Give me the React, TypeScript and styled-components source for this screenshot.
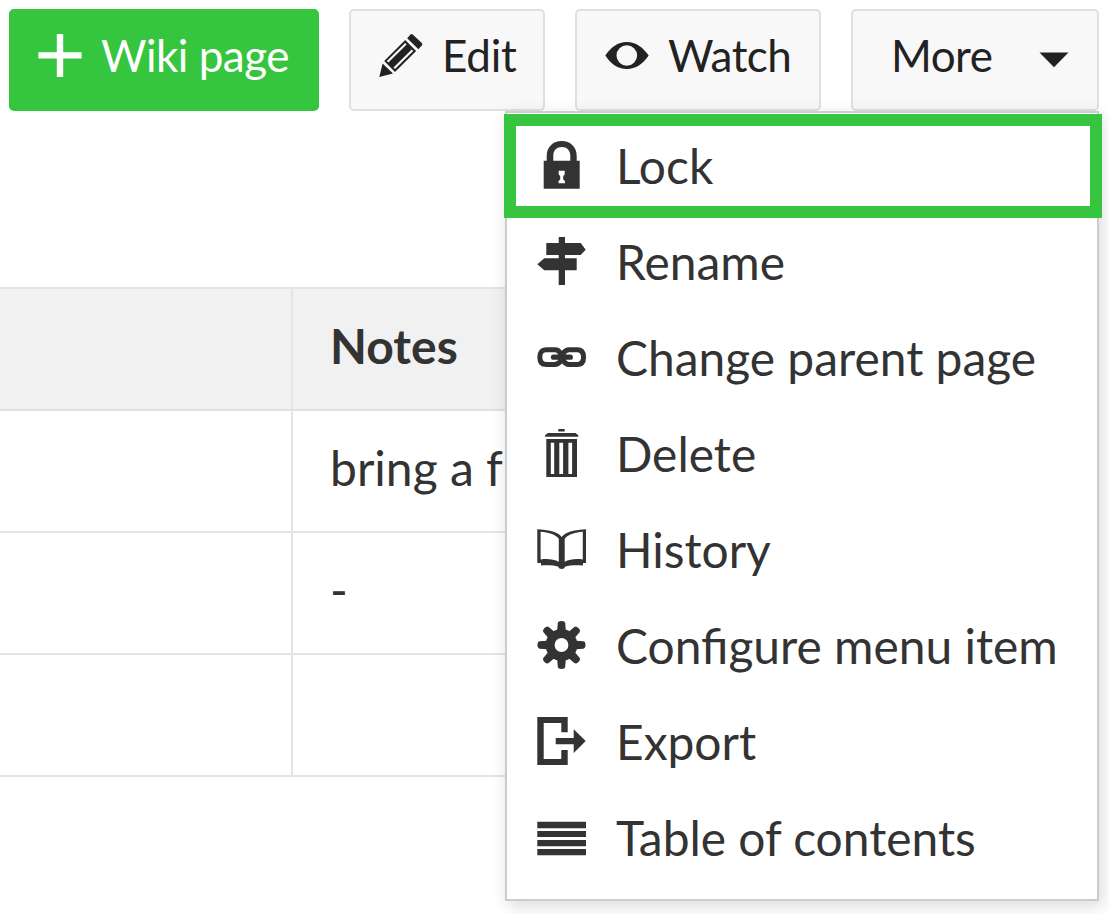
import React from "react";
import styled, { createGlobalStyle } from "styled-components";

const GlobalStyle = createGlobalStyle`
  * { box-sizing: border-box; }
  body {
    margin: 0;
    background: #fff;
    color: #333;
    font-family: Lato, "Liberation Sans", sans-serif;
    overflow: hidden;
  }
`;

const Page = styled.main`
  position: relative;
  width: 1109px;
  height: 914px;
  overflow: hidden;
`;

const Toolbar = styled.div`
  display: flex;
  gap: 30px;
  padding: 9px 0 0 9px;
`;

const Button = styled.button<{ $width: number; $primary?: boolean; $indent?: number }>`
  display: flex;
  align-items: center;
  width: ${(p) => p.$width}px;
  height: 102px;
  padding: 0 0 8px ${(p) => p.$indent ?? 27}px;
  border: 2px solid ${(p) => (p.$primary ? "#35c53f" : "#e0e0e0")};
  border-radius: 5px;
  background: ${(p) => (p.$primary ? "#35c53f" : "#f8f8f8")};
  color: ${(p) => (p.$primary ? "#fff" : "#222")};
  font-family: inherit;
  font-size: 44px;
  line-height: 54px;
  white-space: nowrap;

  svg {
    flex: none;
  }
`;

const ButtonLabel = styled.span<{ $gap?: number; $tight?: boolean }>`
  margin: -3px 0 0 ${(p) => p.$gap ?? 0}px;
  letter-spacing: ${(p) => (p.$tight ? -0.5 : -0.25)}px;
`;

const Caret = styled.svg`
  margin: 8px 0 0 47px;
`;

const Table = styled.div`
  display: grid;
  grid-template-columns: 293px 1fr;
  width: 1060px;
  margin-top: 176px;
  border-top: 2px solid #e4e4e4;
`;

const Cell = styled.div<{ $head?: boolean }>`
  display: flex;
  align-items: center;
  height: 122px;
  padding: 0 0 8px 37px;
  border-bottom: 2px solid ${(p) => (p.$head ? "#e0e0e0" : "#e4e4e4")};
  background: ${(p) => (p.$head ? "#f1f1f1" : "#fff")};
  font-size: 48px;
  font-weight: ${(p) => (p.$head ? 700 : 400)};
  white-space: pre;

  &:nth-child(odd) {
    border-right: 2px solid #e4e4e4;
  }
`;

const Menu = styled.ul`
  position: absolute;
  left: 505px;
  top: 111px;
  width: 594px;
  height: 790px;
  margin: 0;
  padding: 5px 0 0;
  border: 2px solid #ccc;
  background: #fff;
  box-shadow: 3px 5px 16px rgba(0, 0, 0, 0.15);
  list-style: none;
`;

const MenuItem = styled.li`
  display: flex;
  align-items: center;
  gap: 29px;
  height: 96px;
  padding: 0 0 2px 30px;
  font-size: 47.92px;
  line-height: 58px;
  white-space: nowrap;

  svg {
    flex: none;
  }
`;

const MenuLabel = styled.span`
  padding-top: 2px;
`;

const Highlight = styled.div`
  position: absolute;
  left: 504px;
  top: 114px;
  width: 598px;
  height: 104px;
  border: 12px solid #37c540;
  pointer-events: none;
`;

const teeth = [0, 45, 90, 135, 180, 225, 270, 315];

const glyphs: Record<string, React.ReactNode> = {
  lock: (
    <path
      fillRule="evenodd"
      d="M6.7 20.7H9.7V16C9.7 7 16 1 24.7 1S39.7 7 39.7 16V20.7H42.7V48.7H6.7ZM16.3 20.7H33.3V15.5C33.3 10.2 29.7 7 24.8 7S16.3 10.2 16.3 15.5ZM21.7 30.7V34.4L23.2 36V39.5L21.5 41V43.3H27.9V41L26.2 39.5V36L27.7 34.4V30.7Z"
    />
  ),
  sign: (
    <path d="M21.7 1H28V7H43.7L48.7 13.7L43.7 19H28V22.3H39.7V34.3H28V49H21.7V34.3H7.3L.3 28.3L7.3 22.3H21.7V19H9.3V7H21.7Z" />
  ),
  link: (
    <g fill="none" stroke="currentColor" strokeWidth="5">
      <path d="M23.3 21.5C22.4 18.9 20.8 17.8 17.5 17.8H9.5C5 17.8 2.8 20.4 2.8 25.2S5 32.5 9.5 32.5H17.5C20.8 32.5 22.4 31.4 24.4 28" />
      <path d="M26 21.5C27.8 18.9 29.2 17.8 32 17.8H40C44.5 17.8 46.6 20.4 46.6 25.2S44.5 32.5 40 32.5H32C29.2 32.5 27.8 31.4 26 28" />
      <path d="M16.5 25.2H33.3" strokeWidth="5.2" strokeLinecap="round" />
      <path d="M21 25.2H28.5" strokeWidth="10" />
    </g>
  ),
  trash: (
    <path
      fillRule="evenodd"
      d="M21.3 1H27.7V3.4H21.3ZM8 8.7V7.3L11 5H38.5L41.3 7.3V8.7ZM9.3 11H40V49H9.3ZM13.8 14.8V46H17.2V14.8ZM22.3 14.8V46H26.1V14.8ZM31.4 14.8V46H35.1V14.8Z"
    />
  ),
  book: (
    <path
      fillRule="evenodd"
      d="M.3 5.3C11 5.8 20.5 7.5 24.7 13C29 7.5 38.5 5.8 49 5.3V39H46V41.5C39.5 41 32 41.3 28 42.8C27.5 44.2 26.5 45 24.7 45S21.7 44.2 21.3 42.8C17.3 41.3 10 41 4 41.5V39H.3ZM3.6 7.8V35.5C10.5 34.6 17 35.3 21.8 37.8V14.8C18 10 11 8.4 3.6 7.8ZM45.8 7.8C38.5 8.4 31.5 10 27.7 14.8V37.8C32.5 35.3 39 34.6 45.8 35.5Z"
    />
  ),
  gear: (
    <g>
      {teeth.map((a) => (
        <path
          key={a}
          transform={`rotate(${a} 24.5 25)`}
          d="M19.9 14L20.8 3.2Q21.1 1 24.5 1T28.2 3.2L29.1 14Z"
        />
      ))}
      <circle cx="24.5" cy="25" r="11.4" fill="none" stroke="currentColor" strokeWidth="9" />
    </g>
  ),
  exit: (
    <path d="M.3 1H30.7V16.3H24.3V7H6.7V43H24.3V34H30.7V49H.3ZM18.7 22H36.7V13.3L48.7 25.1L36.7 37V28.3H18.7Z" />
  ),
  list: <path d="M.3 9.7H49V16.2H.3ZM.3 19H49V25.1H.3ZM.3 28H49V34.2H.3ZM.3 37.1H49V43.3H.3Z" />,
};

const items = [
  { icon: "lock", label: "Lock" },
  { icon: "sign", label: "Rename" },
  { icon: "link", label: "Change parent page" },
  { icon: "trash", label: "Delete" },
  { icon: "book", label: "History" },
  { icon: "gear", label: "Configure menu item" },
  { icon: "exit", label: "Export" },
  { icon: "list", label: "Table of contents" },
];

export default function App() {
  return (
    <Page>
      <GlobalStyle />
      <Toolbar>
        <Button $width={310} $primary>
          <svg width="46" height="46" viewBox="0 0 46 46" fill="currentColor">
            <path d="M18.8 1H25.2V19.2H43.6V25.6H25.2V44H18.8V25.6H.4V19.2H18.8Z" />
          </svg>
          <ButtonLabel $gap={17} $tight>Wiki page</ButtonLabel>
        </Button>
        <Button $width={196}>
          <svg width="46" height="46" viewBox="0 0 46 46" fill="currentColor">
            <path d="M29.2 5.2L32.3 1.7Q33.5 .5 35 1.8L43.8 10Q45 11.3 43.8 12.6L40.4 16.3Z" />
            <path d="M1.3 44L4.6 30.4L15 40.4Z" />
            <path
              fillRule="evenodd"
              d="M6.2 27.9L27.2 7.1L38.1 18L17 38.9ZM8.9 28.1L10.4 29.6L28.6 11.4L27.1 9.9ZM15.5 34.6L17 36.1L35.2 17.9L33.7 16.4Z"
            />
          </svg>
          <ButtonLabel $gap={18}>Edit</ButtonLabel>
        </Button>
        <Button $width={246}>
          <svg width="46" height="46" viewBox="0 0 46 46" fill="currentColor">
            <path
              fillRule="evenodd"
              d="M1.3 22.5C7 14.2 13.8 9 22.8 9S38.8 14.2 44.7 22.5C38.8 31 31.8 36 22.8 36S7 31 1.3 22.5ZM22.8 12.2A10.3 10.3 0 1 0 22.8 32.8A10.3 10.3 0 1 0 22.8 12.2Z"
            />
          </svg>
          <ButtonLabel $gap={18} $tight>Watch</ButtonLabel>
        </Button>
        <Button $width={248} $indent={38}>
          <ButtonLabel $tight>More</ButtonLabel>
          <Caret width="30" height="16" viewBox="0 0 30 16" fill="currentColor">
            <path d="M.5 .5H29.5L15 15.3Z" />
          </Caret>
        </Button>
      </Toolbar>
      <Table>
        <Cell $head />
        <Cell $head>Notes</Cell>
        <Cell />
        <Cell>bring a f</Cell>
        <Cell />
        <Cell>-</Cell>
        <Cell />
        <Cell />
      </Table>
      <Menu>
        {items.map((item) => (
          <MenuItem key={item.label}>
            <svg width="50" height="50" viewBox="0 0 50 50" fill="currentColor">
              {glyphs[item.icon]}
            </svg>
            <MenuLabel>{item.label}</MenuLabel>
          </MenuItem>
        ))}
      </Menu>
      <Highlight />
    </Page>
  );
}
